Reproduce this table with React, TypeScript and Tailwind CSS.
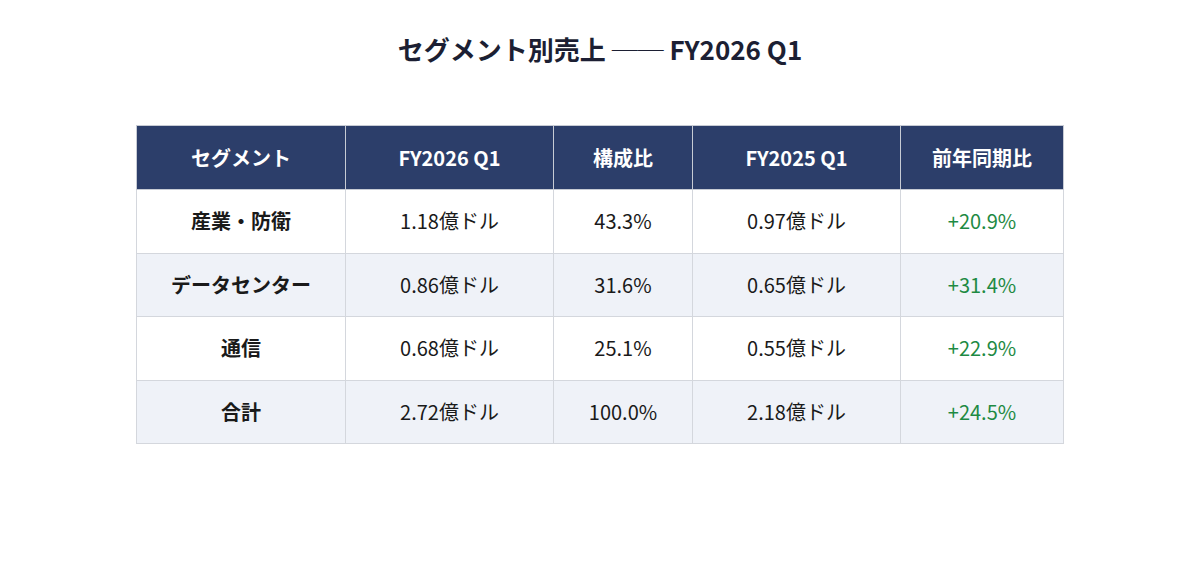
const HEADERS = ['セグメント', 'FY2026 Q1', '構成比', 'FY2025 Q1', '前年同期比']

const ROWS = [
  { name: '産業・防衛', cur: '1.18億ドル', share: '43.3%', prev: '0.97億ドル', yoy: '+20.9%' },
  { name: 'データセンター', cur: '0.86億ドル', share: '31.6%', prev: '0.65億ドル', yoy: '+31.4%' },
  { name: '通信', cur: '0.68億ドル', share: '25.1%', prev: '0.55億ドル', yoy: '+22.9%' },
  { name: '合計', cur: '2.72億ドル', share: '100.0%', prev: '2.18億ドル', yoy: '+24.5%' },
]

export default function App() {
  return (
    <div
      className="min-h-[569px] w-[1200px] bg-white pt-[31px]"
      style={{ fontFamily: '"Noto Sans CJK JP", "Noto Sans", sans-serif' }}
    >
      <h1 className="text-center text-[26px] font-bold leading-[36px] text-[#1c1f33]">
        セグメント別売上 <span className="font-normal">──</span> FY2026 Q1
      </h1>

      <div className="mt-[58px] flex justify-center">
        <table className="w-[927px] table-fixed border-collapse text-[20px]">
          <colgroup>
            <col className="w-[209px]" />
            <col className="w-[208px]" />
            <col className="w-[139px]" />
            <col className="w-[208px]" />
            <col className="w-[163px]" />
          </colgroup>
          <thead>
            <tr className="h-[64px] bg-[#2c3e6a] text-white">
              {HEADERS.map((h) => (
                <th key={h} className="border border-[#c7cbd4] text-center font-bold">
                  {h}
                </th>
              ))}
            </tr>
          </thead>
          <tbody>
            {ROWS.map((row, i) => (
              <tr key={row.name} className={`h-[63.5px] ${i % 2 === 1 ? 'bg-[#eff2f8]' : 'bg-white'}`}>
                <td className="border border-[#d4d7dd] text-center font-bold text-[#1a1a1a]">{row.name}</td>
                <td className="border border-[#d4d7dd] text-center text-[#1a1a1a]">{row.cur}</td>
                <td className="border border-[#d4d7dd] text-center text-[#1a1a1a]">{row.share}</td>
                <td className="border border-[#d4d7dd] text-center text-[#1a1a1a]">{row.prev}</td>
                <td className="border border-[#d4d7dd] text-center text-[#1e8a43]">{row.yoy}</td>
              </tr>
            ))}
          </tbody>
        </table>
      </div>
    </div>
  )
}
